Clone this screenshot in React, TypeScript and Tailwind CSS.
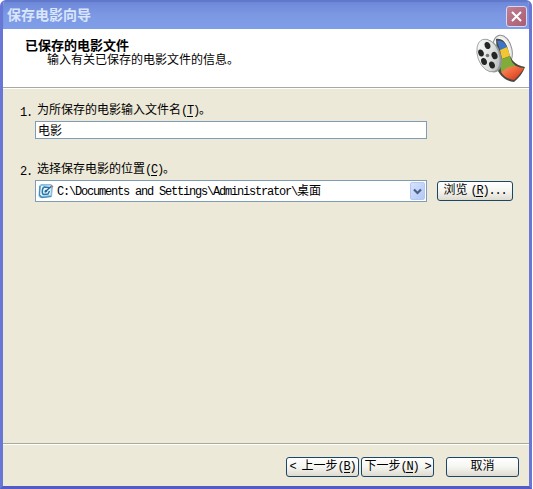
import React, { ReactNode, useState } from "react";

type ButtonProps = {
  children?: ReactNode;
  className?: string;
};

// Half-width characters, 6px each next to the 12px Chinese glyphs
const Latin = ({ children }: { children?: ReactNode }) => (
  <span className="font-['Liberation_Mono',monospace] text-[12px] tracking-[-1.2px] whitespace-pre">
    {children}
  </span>
);

const Hotkey = ({ letter }: { letter: string }) => (
  <Latin>
    (<span className="inline-block h-[12px] border-b border-black leading-[12px]">{letter}</span>)
  </Latin>
);

const Button = ({ children, className = "" }: ButtonProps) => (
  <button
    type="button"
    className={`h-5 shrink-0 rounded-[3px] border border-[#1c4668] bg-linear-to-b from-white via-[#f5f5f1] to-[#dedbd0] text-center leading-[18px] whitespace-nowrap ${className}`}
  >
    {children}
  </button>
);

const ReelIcon = () => (
  <svg className="h-[54px] w-[54px]" viewBox="0 0 54 54" fill="none">
    <defs>
      <linearGradient id="disc" x1="0" y1="0" x2="1" y2="1">
        <stop offset="0" stopColor="#ffffff" />
        <stop offset="0.6" stopColor="#dcdede" />
        <stop offset="1" stopColor="#a5a9a9" />
      </linearGradient>
      <linearGradient id="red" x1="0" y1="0" x2="1" y2="1">
        <stop offset="0" stopColor="#f49a62" />
        <stop offset="0.5" stopColor="#ee6138" />
        <stop offset="1" stopColor="#c92e1a" />
      </linearGradient>
    </defs>
    {/* back disc */}
    <ellipse cx="29.5" cy="19.5" rx="9.5" ry="15.5" transform="rotate(-12 29.5 19.5)" fill="#ececec" stroke="#8b8f8f" />
    <ellipse cx="29" cy="20" rx="7.5" ry="13.5" transform="rotate(-12 29 20)" fill="#f8f8f8" />
    {/* film strip */}
    <path d="M23 8 C29 7 33 11 35 18 C37 28 41 34 52 36 C50 42 46 47 41 51 C34 50 29 47 25 40Z" fill="#4a473e" />
    <path d="M24 10 C29 9 32 12 34 16 L27 19 C26 16 25 13 24 10Z" fill="#3c76ca" />
    <path d="M27 19 L34 16 C35.5 19 36 22 37 25 L29 28Z" fill="#f2c632" />
    <path d="M27 29 L37 25 C38 30 40 33 43 35 C38 36 32 38 28 41Z" fill="#80ad39" />
    <path d="M28 41 C32 37 38 35 43 35 C46 36 48 37 51 37 C48 42 45 45 41 49 C35 48 31 46 28 41Z" fill="url(#red)" />
    {/* front disc */}
    <ellipse cx="17.5" cy="25" rx="10.5" ry="17" transform="rotate(-20 17.5 25)" fill="#8f9393" />
    <ellipse cx="15.5" cy="24.5" rx="10.8" ry="17" transform="rotate(-20 15.5 24.5)" fill="url(#disc)" stroke="#969999" strokeWidth="0.8" />
    <g fill="#242626">
      <ellipse cx="14.5" cy="14.5" rx="2.8" ry="3.6" transform="rotate(-20 14.5 14.5)" />
      <ellipse cx="8" cy="22" rx="2.7" ry="3.6" transform="rotate(-20 8 22)" />
      <ellipse cx="11" cy="30.5" rx="2.8" ry="3.6" transform="rotate(-20 11 30.5)" />
      <ellipse cx="19" cy="34" rx="2.8" ry="3.6" transform="rotate(-20 19 34)" />
      <ellipse cx="21.5" cy="24.5" rx="2.9" ry="3.8" transform="rotate(-20 21.5 24.5)" />
    </g>
    <circle cx="14.5" cy="24.5" r="1.8" fill="#717777" />
  </svg>
);

const DesktopIcon = () => (
  <svg className="h-4 w-4 shrink-0" viewBox="0 0 16 16" fill="none">
    <path d="M3 1 L13 1 L15 3 L14 14 L2 15 L0.5 13 L1 3Z" fill="#8dbddd" />
    <path d="M3 3 L13 2.5 L12.5 12 L3 13 L1.5 11Z" fill="#eaf7fc" />
    <path d="M2 3 L1.5 12 L4 14.5 L13 13.5" stroke="#4389b8" strokeWidth="1.2" />
    <path d="M11 4.5 L6.5 4 C3.5 5 4 11 5.5 11.5 L10 11 L11.5 8" stroke="#2776ae" strokeWidth="1.5" />
    <path d="M7 9 L13 3.5" stroke="#24628f" strokeWidth="1.5" />
    <path d="M6.5 9.5 L7 6.5 L9.5 9Z" fill="#24628f" />
    <path d="M13 2.5 L15 4" stroke="#c46e65" strokeWidth="1.5" />
  </svg>
);

const App = () => {
  const [fileName, setFileName] = useState("电影");

  return (
    <div className="h-[489px] w-[533px] bg-white font-['Liberation_Mono','Noto_Sans_CJK_SC',sans-serif] text-[12px] text-black">
      <div className="flex h-[489px] w-[532px] flex-col overflow-hidden rounded-t-[6px] border-x-[3px] border-b-[3px] border-x-[#6876d6] border-b-[#535bc4] bg-[#ece9d8]">
        <header className="flex h-[29px] shrink-0 items-center justify-between bg-linear-to-b from-[#6c86d6] via-[#7c98e3] to-[#809fe9] pr-[2px] pl-1 shadow-[inset_0_2px_1px_#6078ca]">
          <span className="pt-[3px] text-[14px] leading-[20px] font-bold text-[#d9e5fb]">保存电影向导</span>
          <button
            type="button"
            aria-label="关闭"
            className="mt-[3px] flex h-[21px] w-[21px] items-center justify-center rounded-[3px] border border-[#d5d9f3] bg-linear-to-br from-[#c17f93] to-[#a95c72]"
          >
            <svg className="h-[13px] w-[13px]" viewBox="0 0 13 13">
              <path d="M2 2 L11 11 M11 2 L2 11" stroke="white" strokeWidth="2" />
            </svg>
          </button>
        </header>

        <section className="flex h-[59px] shrink-0 justify-between border-b border-[#aaa99e] bg-white pl-[22px]">
          <div className="pt-[10px]">
            <h1 className="text-[13px] leading-[15px] font-bold">已保存的电影文件</h1>
            <p className="pl-[22px] leading-[15px]">输入有关已保存的电影文件的信息。</p>
          </div>
          <div className="pt-[2px] pr-[2px]">
            <ReelIcon />
          </div>
        </section>

        <main className="flex grow flex-col border-t border-white pl-[17px]">
          <div className="mt-[14px] flex h-[16px] leading-[16px]">
            <span className="w-[17px] pt-[2px]"><Latin>1.</Latin></span>
            <label htmlFor="file-name">
              为所保存的电影输入文件名<Hotkey letter="T" />。
            </label>
          </div>
          <input
            id="file-name"
            value={fileName}
            onChange={(e) => setFileName(e.target.value)}
            className="mt-[2px] ml-[15px] h-[18px] w-[392px] border border-[#7f9db9] bg-white px-[2px] leading-[16px] outline-none"
          />
          <div className="mt-[23px] flex h-[16px] leading-[16px]">
            <span className="w-[17px] pt-[2px]"><Latin>2.</Latin></span>
            <label>
              选择保存电影的位置<Hotkey letter="C" />。
            </label>
          </div>
          <div className="mt-[2px] ml-[15px] flex items-center gap-[10px]">
            <div className="flex h-[22px] w-[392px] shrink-0 items-center border border-[#7f9db9] bg-white pr-px pl-[2px]">
              <DesktopIcon />
              <span className="ml-[3px] grow pt-px leading-[18px] whitespace-nowrap">
                <Latin>{"C:\\Documents and Settings\\Administrator\\"}</Latin>桌面
              </span>
              <span className="flex h-[18px] w-[15px] items-center justify-center rounded-[2px] border border-[#b5c8f2] bg-linear-to-br from-[#d6e2fd] to-[#b2c8f6]">
                <svg className="h-[7px] w-[9px] shrink-0" viewBox="0 0 9 7" fill="none">
                  <path d="M1 1.5 L4.5 5 L8 1.5" stroke="#485f86" strokeWidth="2.2" />
                </svg>
              </span>
            </div>
            <Button className="w-[76px]">
              <span className="mr-[3px]">浏览</span><Hotkey letter="R" /><Latin>...</Latin>
            </Button>
          </div>
        </main>

        <footer className="h-[43px] shrink-0 border-t border-[#aaa99e]">
          <div className="flex justify-end border-t border-white pt-[12px] pr-[10px]">
            <Button className="w-[73px]">
              <Latin>{"< "}</Latin>上一步<Hotkey letter="B" />
            </Button>
            <Button className="ml-[2px] w-[73px]">
              下一步<Hotkey letter="N" /><Latin>{" >"}</Latin>
            </Button>
            <Button className="ml-[12px] w-[73px]">取消</Button>
          </div>
        </footer>
      </div>
    </div>
  );
};

export default App;
